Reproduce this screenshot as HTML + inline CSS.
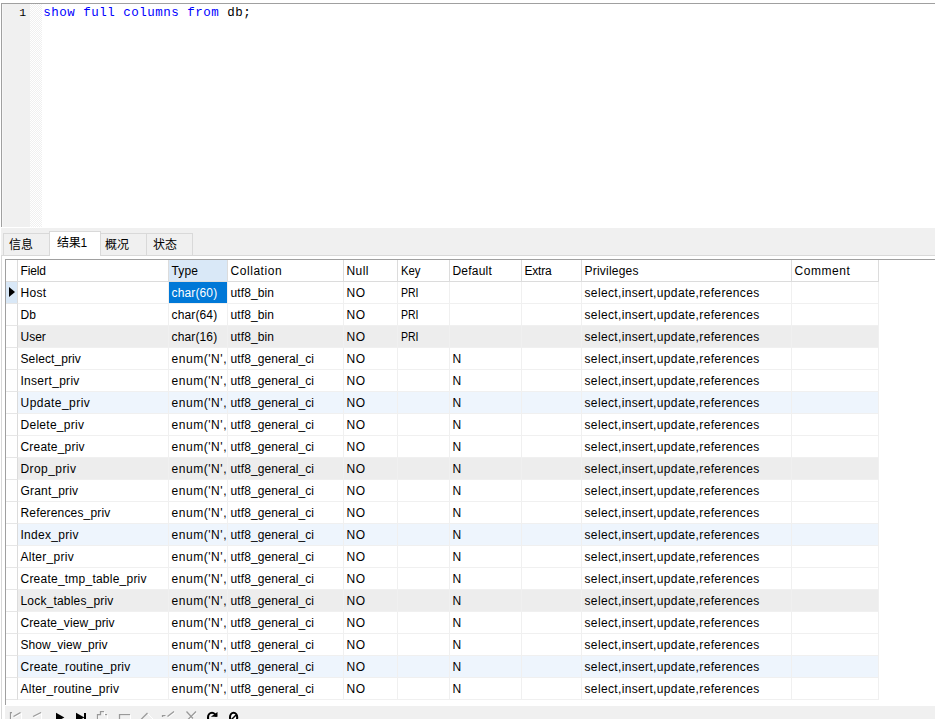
<!DOCTYPE html>
<html lang="zh"><head><meta charset="utf-8"><title>show full columns from db</title>
<style>
html,body{margin:0;padding:0;}
body{width:935px;height:719px;overflow:hidden;background:#fff;position:relative;font-family:"Liberation Sans","Noto Sans CJK SC",sans-serif;font-size:12px;color:#000;}
div{box-sizing:border-box;}
#editor{position:absolute;left:1px;top:3px;width:934px;height:224px;border-left:1px solid #a0a0a0;border-top:1px solid #a0a0a0;background:#fff;}
#editor .gutter{position:absolute;left:0;top:0;width:28px;height:223px;background:#f0f0f0;border-left:1px solid #f6f6f6;}
#editor .fold{position:absolute;left:28px;top:0;width:12px;height:223px;background:repeating-conic-gradient(#f0f0f0 0% 25%,#fff 0% 50%) 0 0/2px 2px;}
#editor .ln{position:absolute;left:0;width:24.2px;text-align:right;font-family:"Liberation Mono",monospace;font-size:11.5px;line-height:16px;top:1.4px;color:#000;}
#editor .code{position:absolute;left:41.3px;top:1px;font-family:"Liberation Mono",monospace;font-size:12.5px;letter-spacing:0.5px;line-height:16px;white-space:pre;color:#000;}
#editor .kw{color:#0000ff;}
#tabbar{position:absolute;left:1px;top:228px;width:934px;height:28px;background:#f0f0f0;border-bottom:1px solid #d9d9d9;}
.tab{position:absolute;top:5px;height:22px;border:1px solid #d9d9d9;border-bottom:none;background:#f0f0f0;line-height:22px;padding-left:5px;font-size:12px;white-space:nowrap;}
.tab.active{top:3px;height:25px;background:#fff;line-height:23px;padding-left:7px;letter-spacing:-0.3px;}
#panel{position:absolute;left:1px;top:256px;width:934px;height:463px;border-left:1px solid #d9d9d9;background:#fff;}
#grid{position:absolute;left:5px;top:259px;width:930px;height:446px;border-left:1px solid #a0a0a0;border-top:1px solid #a0a0a0;background:#fff;}
.hrow{position:absolute;left:0;top:0;height:22px;width:873px;}
.hc,.c{position:absolute;top:0;height:22px;border-right:1px solid #f0f0f0;border-bottom:1px solid #f0f0f0;padding-left:2.5px;padding-top:1px;line-height:21px;white-space:nowrap;overflow:hidden;}
.hc{line-height:21px;border-color:#dcdcdc;}
.hc.sel{background:#d9e8f7;}
.ind{position:absolute;left:0;top:0;width:12px;height:22px;border-right:1px solid #dcdcdc;border-bottom:1px solid #e6e6e6;}
.hrow .ind{border-bottom-color:#dcdcdc;}
.ind.cur{background:#d9e8f7;}
.tri{position:absolute;left:3px;top:4.7px;width:0;height:0;border-left:6.3px solid #000;border-top:5.8px solid transparent;border-bottom:5.8px solid transparent;}
.row{position:absolute;left:0;height:22px;width:873px;}
.row.gray .c{background:#ededed;}
.row.blue .c{background:#eef5fd;}
.c.selc{background:#0078d7;color:#fff;}
.sx{display:inline-block;transform-origin:0 50%;}
#toolbar{position:absolute;left:5px;top:706px;width:930px;height:13px;background:#f0f0f0;overflow:hidden;}
</style></head><body>
<div id="editor"><div class="gutter"></div><div class="fold"></div><div class="ln">1</div><div class="code"><span class="kw">show full columns from</span> db;</div></div>
<div id="tabbar"><div class="tab" style="left:2px;width:47px">信息</div><div class="tab" style="left:99px;width:47px;padding-left:4px">概况</div><div class="tab" style="left:145px;width:47px;padding-left:6px">状态</div><div class="tab active" style="left:48px;width:52px">结果1</div></div>
<div id="panel"></div>
<div id="grid">
<div class="hrow"><div class="ind"></div><div class="hc" style="left:12px;width:151px;letter-spacing:-0.150px;">Field</div><div class="hc sel" style="left:163px;width:59px;letter-spacing:0.133px;">Type</div><div class="hc" style="left:222px;width:116px;letter-spacing:0.551px;">Collation</div><div class="hc" style="left:338px;width:54px;letter-spacing:0.400px;">Null</div><div class="hc" style="left:392px;width:52px;"><span class="sx" style="transform:scaleX(0.943)">Key</span></div><div class="hc" style="left:444px;width:72px;letter-spacing:0.200px;">Default</div><div class="hc" style="left:516px;width:60px;letter-spacing:-0.200px;">Extra</div><div class="hc" style="left:576px;width:210px;letter-spacing:0.222px;">Privileges</div><div class="hc" style="left:786px;width:87px;letter-spacing:0.533px;">Comment</div></div>
<div class="row" style="top:22px"><div class="ind cur"><i class="tri"></i></div><div class="c" style="left:12px;width:151px;letter-spacing:0.333px;">Host</div><div class="c selc" style="left:163px;width:59px;letter-spacing:0.143px;">char(60)</div><div class="c" style="left:222px;width:116px;letter-spacing:0.115px;">utf8_bin</div><div class="c" style="left:338px;width:54px;letter-spacing:0.500px;">NO</div><div class="c" style="left:392px;width:52px;"><span class="sx" style="transform:scaleX(0.875)">PRI</span></div><div class="c" style="left:444px;width:72px;"></div><div class="c" style="left:516px;width:60px;"></div><div class="c" style="left:576px;width:210px;letter-spacing:0.353px;">select,insert,update,references</div><div class="c" style="left:786px;width:87px;"></div></div>
<div class="row" style="top:44px"><div class="ind"></div><div class="c" style="left:12px;width:151px;">Db</div><div class="c" style="left:163px;width:59px;letter-spacing:0.143px;">char(64)</div><div class="c" style="left:222px;width:116px;letter-spacing:0.115px;">utf8_bin</div><div class="c" style="left:338px;width:54px;letter-spacing:0.500px;">NO</div><div class="c" style="left:392px;width:52px;"><span class="sx" style="transform:scaleX(0.875)">PRI</span></div><div class="c" style="left:444px;width:72px;"></div><div class="c" style="left:516px;width:60px;"></div><div class="c" style="left:576px;width:210px;letter-spacing:0.353px;">select,insert,update,references</div><div class="c" style="left:786px;width:87px;"></div></div>
<div class="row gray" style="top:66px"><div class="ind"></div><div class="c" style="left:12px;width:151px;">User</div><div class="c" style="left:163px;width:59px;letter-spacing:0.143px;">char(16)</div><div class="c" style="left:222px;width:116px;letter-spacing:0.115px;">utf8_bin</div><div class="c" style="left:338px;width:54px;letter-spacing:0.500px;">NO</div><div class="c" style="left:392px;width:52px;"><span class="sx" style="transform:scaleX(0.875)">PRI</span></div><div class="c" style="left:444px;width:72px;"></div><div class="c" style="left:516px;width:60px;"></div><div class="c" style="left:576px;width:210px;letter-spacing:0.353px;">select,insert,update,references</div><div class="c" style="left:786px;width:87px;"></div></div>
<div class="row" style="top:88px"><div class="ind"></div><div class="c" style="left:12px;width:151px;letter-spacing:0.100px;">Select_priv</div><div class="c" style="left:163px;width:59px;letter-spacing:0.550px;">enum('N',</div><div class="c" style="left:222px;width:116px;letter-spacing:0.100px;">utf8_general_ci</div><div class="c" style="left:338px;width:54px;letter-spacing:0.500px;">NO</div><div class="c" style="left:392px;width:52px;"></div><div class="c" style="left:444px;width:72px;">N</div><div class="c" style="left:516px;width:60px;"></div><div class="c" style="left:576px;width:210px;letter-spacing:0.353px;">select,insert,update,references</div><div class="c" style="left:786px;width:87px;"></div></div>
<div class="row" style="top:110px"><div class="ind"></div><div class="c" style="left:12px;width:151px;letter-spacing:0.280px;">Insert_priv</div><div class="c" style="left:163px;width:59px;letter-spacing:0.550px;">enum('N',</div><div class="c" style="left:222px;width:116px;letter-spacing:0.100px;">utf8_general_ci</div><div class="c" style="left:338px;width:54px;letter-spacing:0.500px;">NO</div><div class="c" style="left:392px;width:52px;"></div><div class="c" style="left:444px;width:72px;">N</div><div class="c" style="left:516px;width:60px;"></div><div class="c" style="left:576px;width:210px;letter-spacing:0.353px;">select,insert,update,references</div><div class="c" style="left:786px;width:87px;"></div></div>
<div class="row blue" style="top:132px"><div class="ind"></div><div class="c" style="left:12px;width:151px;letter-spacing:0.460px;">Update_priv</div><div class="c" style="left:163px;width:59px;letter-spacing:0.550px;">enum('N',</div><div class="c" style="left:222px;width:116px;letter-spacing:0.100px;">utf8_general_ci</div><div class="c" style="left:338px;width:54px;letter-spacing:0.500px;">NO</div><div class="c" style="left:392px;width:52px;"></div><div class="c" style="left:444px;width:72px;">N</div><div class="c" style="left:516px;width:60px;"></div><div class="c" style="left:576px;width:210px;letter-spacing:0.353px;">select,insert,update,references</div><div class="c" style="left:786px;width:87px;"></div></div>
<div class="row" style="top:154px"><div class="ind"></div><div class="c" style="left:12px;width:151px;letter-spacing:0.280px;">Delete_priv</div><div class="c" style="left:163px;width:59px;letter-spacing:0.550px;">enum('N',</div><div class="c" style="left:222px;width:116px;letter-spacing:0.100px;">utf8_general_ci</div><div class="c" style="left:338px;width:54px;letter-spacing:0.500px;">NO</div><div class="c" style="left:392px;width:52px;"></div><div class="c" style="left:444px;width:72px;">N</div><div class="c" style="left:516px;width:60px;"></div><div class="c" style="left:576px;width:210px;letter-spacing:0.353px;">select,insert,update,references</div><div class="c" style="left:786px;width:87px;"></div></div>
<div class="row" style="top:176px"><div class="ind"></div><div class="c" style="left:12px;width:151px;letter-spacing:0.200px;">Create_priv</div><div class="c" style="left:163px;width:59px;letter-spacing:0.550px;">enum('N',</div><div class="c" style="left:222px;width:116px;letter-spacing:0.100px;">utf8_general_ci</div><div class="c" style="left:338px;width:54px;letter-spacing:0.500px;">NO</div><div class="c" style="left:392px;width:52px;"></div><div class="c" style="left:444px;width:72px;">N</div><div class="c" style="left:516px;width:60px;"></div><div class="c" style="left:576px;width:210px;letter-spacing:0.353px;">select,insert,update,references</div><div class="c" style="left:786px;width:87px;"></div></div>
<div class="row gray" style="top:198px"><div class="ind"></div><div class="c" style="left:12px;width:151px;letter-spacing:0.425px;">Drop_priv</div><div class="c" style="left:163px;width:59px;letter-spacing:0.550px;">enum('N',</div><div class="c" style="left:222px;width:116px;letter-spacing:0.100px;">utf8_general_ci</div><div class="c" style="left:338px;width:54px;letter-spacing:0.500px;">NO</div><div class="c" style="left:392px;width:52px;"></div><div class="c" style="left:444px;width:72px;">N</div><div class="c" style="left:516px;width:60px;"></div><div class="c" style="left:576px;width:210px;letter-spacing:0.353px;">select,insert,update,references</div><div class="c" style="left:786px;width:87px;"></div></div>
<div class="row" style="top:220px"><div class="ind"></div><div class="c" style="left:12px;width:151px;letter-spacing:0.178px;">Grant_priv</div><div class="c" style="left:163px;width:59px;letter-spacing:0.550px;">enum('N',</div><div class="c" style="left:222px;width:116px;letter-spacing:0.100px;">utf8_general_ci</div><div class="c" style="left:338px;width:54px;letter-spacing:0.500px;">NO</div><div class="c" style="left:392px;width:52px;"></div><div class="c" style="left:444px;width:72px;">N</div><div class="c" style="left:516px;width:60px;"></div><div class="c" style="left:576px;width:210px;letter-spacing:0.353px;">select,insert,update,references</div><div class="c" style="left:786px;width:87px;"></div></div>
<div class="row" style="top:242px"><div class="ind"></div><div class="c" style="left:12px;width:151px;letter-spacing:0.171px;">References_priv</div><div class="c" style="left:163px;width:59px;letter-spacing:0.550px;">enum('N',</div><div class="c" style="left:222px;width:116px;letter-spacing:0.100px;">utf8_general_ci</div><div class="c" style="left:338px;width:54px;letter-spacing:0.500px;">NO</div><div class="c" style="left:392px;width:52px;"></div><div class="c" style="left:444px;width:72px;">N</div><div class="c" style="left:516px;width:60px;"></div><div class="c" style="left:576px;width:210px;letter-spacing:0.353px;">select,insert,update,references</div><div class="c" style="left:786px;width:87px;"></div></div>
<div class="row blue" style="top:264px"><div class="ind"></div><div class="c" style="left:12px;width:151px;letter-spacing:0.289px;">Index_priv</div><div class="c" style="left:163px;width:59px;letter-spacing:0.550px;">enum('N',</div><div class="c" style="left:222px;width:116px;letter-spacing:0.100px;">utf8_general_ci</div><div class="c" style="left:338px;width:54px;letter-spacing:0.500px;">NO</div><div class="c" style="left:392px;width:52px;"></div><div class="c" style="left:444px;width:72px;">N</div><div class="c" style="left:516px;width:60px;"></div><div class="c" style="left:576px;width:210px;letter-spacing:0.353px;">select,insert,update,references</div><div class="c" style="left:786px;width:87px;"></div></div>
<div class="row" style="top:286px"><div class="ind"></div><div class="c" style="left:12px;width:151px;letter-spacing:0.289px;">Alter_priv</div><div class="c" style="left:163px;width:59px;letter-spacing:0.550px;">enum('N',</div><div class="c" style="left:222px;width:116px;letter-spacing:0.100px;">utf8_general_ci</div><div class="c" style="left:338px;width:54px;letter-spacing:0.500px;">NO</div><div class="c" style="left:392px;width:52px;"></div><div class="c" style="left:444px;width:72px;">N</div><div class="c" style="left:516px;width:60px;"></div><div class="c" style="left:576px;width:210px;letter-spacing:0.353px;">select,insert,update,references</div><div class="c" style="left:786px;width:87px;"></div></div>
<div class="row" style="top:308px"><div class="ind"></div><div class="c" style="left:12px;width:151px;letter-spacing:0.230px;">Create_tmp_table_priv</div><div class="c" style="left:163px;width:59px;letter-spacing:0.550px;">enum('N',</div><div class="c" style="left:222px;width:116px;letter-spacing:0.100px;">utf8_general_ci</div><div class="c" style="left:338px;width:54px;letter-spacing:0.500px;">NO</div><div class="c" style="left:392px;width:52px;"></div><div class="c" style="left:444px;width:72px;">N</div><div class="c" style="left:516px;width:60px;"></div><div class="c" style="left:576px;width:210px;letter-spacing:0.353px;">select,insert,update,references</div><div class="c" style="left:786px;width:87px;"></div></div>
<div class="row gray" style="top:330px"><div class="ind"></div><div class="c" style="left:12px;width:151px;letter-spacing:0.187px;">Lock_tables_priv</div><div class="c" style="left:163px;width:59px;letter-spacing:0.550px;">enum('N',</div><div class="c" style="left:222px;width:116px;letter-spacing:0.100px;">utf8_general_ci</div><div class="c" style="left:338px;width:54px;letter-spacing:0.500px;">NO</div><div class="c" style="left:392px;width:52px;"></div><div class="c" style="left:444px;width:72px;">N</div><div class="c" style="left:516px;width:60px;"></div><div class="c" style="left:576px;width:210px;letter-spacing:0.353px;">select,insert,update,references</div><div class="c" style="left:786px;width:87px;"></div></div>
<div class="row" style="top:352px"><div class="ind"></div><div class="c" style="left:12px;width:151px;letter-spacing:0.093px;">Create_view_priv</div><div class="c" style="left:163px;width:59px;letter-spacing:0.550px;">enum('N',</div><div class="c" style="left:222px;width:116px;letter-spacing:0.100px;">utf8_general_ci</div><div class="c" style="left:338px;width:54px;letter-spacing:0.500px;">NO</div><div class="c" style="left:392px;width:52px;"></div><div class="c" style="left:444px;width:72px;">N</div><div class="c" style="left:516px;width:60px;"></div><div class="c" style="left:576px;width:210px;letter-spacing:0.353px;">select,insert,update,references</div><div class="c" style="left:786px;width:87px;"></div></div>
<div class="row" style="top:374px"><div class="ind"></div><div class="c" style="left:12px;width:151px;letter-spacing:0.016px;">Show_view_priv</div><div class="c" style="left:163px;width:59px;letter-spacing:0.550px;">enum('N',</div><div class="c" style="left:222px;width:116px;letter-spacing:0.100px;">utf8_general_ci</div><div class="c" style="left:338px;width:54px;letter-spacing:0.500px;">NO</div><div class="c" style="left:392px;width:52px;"></div><div class="c" style="left:444px;width:72px;">N</div><div class="c" style="left:516px;width:60px;"></div><div class="c" style="left:576px;width:210px;letter-spacing:0.353px;">select,insert,update,references</div><div class="c" style="left:786px;width:87px;"></div></div>
<div class="row blue" style="top:396px"><div class="ind"></div><div class="c" style="left:12px;width:151px;letter-spacing:0.244px;">Create_routine_priv</div><div class="c" style="left:163px;width:59px;letter-spacing:0.550px;">enum('N',</div><div class="c" style="left:222px;width:116px;letter-spacing:0.100px;">utf8_general_ci</div><div class="c" style="left:338px;width:54px;letter-spacing:0.500px;">NO</div><div class="c" style="left:392px;width:52px;"></div><div class="c" style="left:444px;width:72px;">N</div><div class="c" style="left:516px;width:60px;"></div><div class="c" style="left:576px;width:210px;letter-spacing:0.353px;">select,insert,update,references</div><div class="c" style="left:786px;width:87px;"></div></div>
<div class="row" style="top:418px"><div class="ind"></div><div class="c" style="left:12px;width:151px;letter-spacing:0.259px;">Alter_routine_priv</div><div class="c" style="left:163px;width:59px;letter-spacing:0.550px;">enum('N',</div><div class="c" style="left:222px;width:116px;letter-spacing:0.100px;">utf8_general_ci</div><div class="c" style="left:338px;width:54px;letter-spacing:0.500px;">NO</div><div class="c" style="left:392px;width:52px;"></div><div class="c" style="left:444px;width:72px;">N</div><div class="c" style="left:516px;width:60px;"></div><div class="c" style="left:576px;width:210px;letter-spacing:0.353px;">select,insert,update,references</div><div class="c" style="left:786px;width:87px;"></div></div>
</div>
<div id="toolbar">
<svg width="260" height="13" viewBox="0 706 260 13" style="position:absolute;left:-5px;top:0" shape-rendering="auto" fill="none" stroke-linecap="butt">
<!-- first (disabled) -->
<g stroke="#fff" stroke-width="1">
<path d="M11.5 713.5V719M14.5 717.5L21.5 713.5M21.5 713V719"/>
<path d="M34.5 717.5L41.5 713.5M41.5 713V719"/>
<path d="M101.5 712.5H104.5V715.5H107.5V719M98.5 715.5V719"/>
<path d="M120.5 715.5H130.5M130.5 715V719"/>
<path d="M147.5 713.5L153.5 719.5"/>
<path d="M163.5 716.5H166M168.5 717.5L175 712.5"/>
<path d="M187.5 712.5L194 719.5M197 712.5L189.5 719.5"/>
</g>
<g stroke="#999" stroke-width="1.25">
<path d="M10.5 712V719M10 712.5H12M13.5 716.5L20.5 712.5"/>
<path d="M33 716.5L41 712.5"/>
<path d="M104 711.5H100.5V714.5H97.5V719M105 714.5H107"/>
<path d="M119.5 719V714.5H130"/>
<path d="M147.5 713L141 719.5"/>
<path d="M162.5 717V715.5H165.5M167.5 716.5L174 711.5"/>
<path d="M186.5 711.5L193 718.5M196 711.5L188 719.5"/>
</g>
<!-- play -->
<path d="M56 712.8L64.4 717.4L56 722Z" fill="#000"/>
<!-- last -->
<path d="M76 712.8L84.4 717.4L76 722Z" fill="#000"/>
<rect x="84" y="713" width="2" height="11" fill="#000"/>
<!-- refresh -->
<ellipse cx="212" cy="717.5" rx="4" ry="4.7" stroke="#000" stroke-width="2.1"/>
<rect x="212.5" y="716.7" width="6" height="3" fill="#f0f0f0"/>
<path d="M215.6 711.2L217.6 711.2L217.6 713Z" fill="#f0f0f0"/>
<path d="M217.5 712V716.7H210.8Z" fill="#000"/>
<!-- stop -->
<ellipse cx="233.6" cy="717.4" rx="3.6" ry="4.6" stroke="#000" stroke-width="2.1" fill="#fff"/>
<path d="M236 715L231.5 719.5" stroke="#000" stroke-width="1.5"/>
</svg>
</div>
</body></html>
